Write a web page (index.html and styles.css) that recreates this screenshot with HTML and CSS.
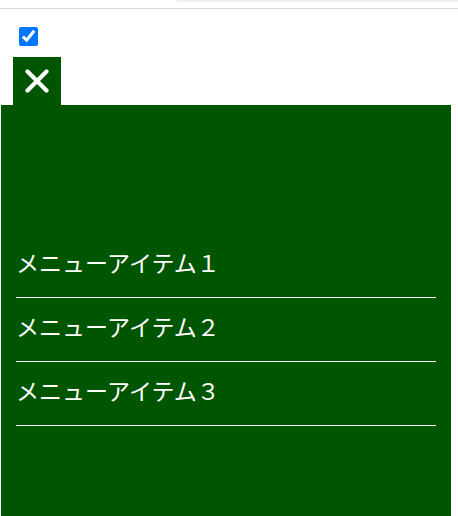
FILE: index.html
```html
<!DOCTYPE html>
<html lang="ja">
<head>
<meta charset="utf-8">
<title>Menu</title>
<link rel="stylesheet" href="styles.css">
</head>
<body>
<div class="topbar"><div class="pill"></div></div>
<div class="page">
  <input class="toggle-check" type="checkbox" checked>
  <div class="close-btn">
    <svg width="24" height="24" viewBox="0 0 24 24"><path d="M2.5 2.5 L21.5 21.5 M21.5 2.5 L2.5 21.5" stroke="#fff" stroke-width="4.2" stroke-linecap="round" fill="none"/></svg>
  </div>
  <nav class="panel">
    <ul class="menu">
      <li class="menu-item">メニューアイテム１</li>
      <li class="menu-item">メニューアイテム２</li>
      <li class="menu-item">メニューアイテム３</li>
    </ul>
  </nav>
</div>
</body>
</html>
```
FILE: styles.css
```css
html, body {
  margin: 0;
  padding: 0;
  height: 100%;
  background: #fff;
  overflow: hidden;
}
body {
  font-family: "Noto Sans CJK JP", "Noto Sans", sans-serif;
}
.topbar {
  height: 8px;
  border-bottom: 1px solid #dcdcdc;
  position: relative;
}
.pill {
  position: absolute;
  top: 0;
  left: 176px;
  right: 0;
  height: 2px;
  background: #f0f0f0;
  border-radius: 0 0 0 8px;
}
.page {
  padding-left: 1px;
  border-left: 1px solid #9a9a9a;
  margin-left: -1px;
  height: calc(100% - 9px);
  display: flex;
  flex-direction: column;
}
.toggle-check {
  display: block;
  width: 19px;
  height: 19px;
  margin: 18px 0 0 18px;
  accent-color: #0075ff;
}
.close-btn {
  width: 48px;
  height: 48px;
  margin: 11px 0 0 12px;
  background: #005500;
  display: flex;
  align-items: center;
  justify-content: center;
}
.close-btn svg {
  display: block;
}
.panel {
  width: 450px;
  flex: 1;
  background: #005500;
  padding: 129px 15px 0;
  box-sizing: border-box;
}
.menu {
  list-style: none;
  margin: 0;
  padding: 0;
}
.menu-item {
  color: #fff;
  font-size: 23px;
  line-height: 33px;
  padding: 12px 0 18px 0;
  border-bottom: 1px solid #fff;
}
```
